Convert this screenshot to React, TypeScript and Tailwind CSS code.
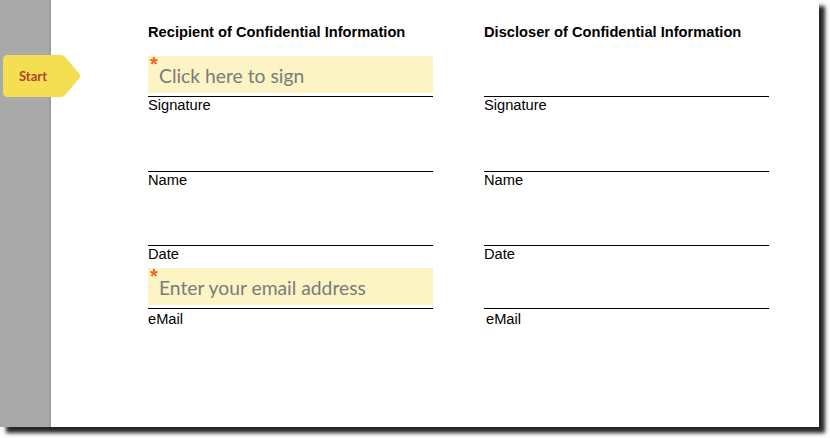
import React from 'react';

interface FieldProps {
  label: string;
  height: string;
  placeholder?: string;
  labelClass?: string;
}

const arial = { fontFamily: '"Liberation Sans", Arial, sans-serif' };
const myriad = { fontFamily: 'Lato, "Noto Sans", sans-serif' };

function Field({ label, height, placeholder, labelClass = '' }: FieldProps) {
  return (
    <div>
      <div className={`flex flex-col justify-end border-b border-black ${height}`}>
        {placeholder && (
          <div className="relative mb-[3px] h-[37px] bg-[#fcf4c4] pl-[11px] text-[19.3px] leading-[39px] text-[#7b7b7b]" style={myriad}>
            <span className="absolute left-[2px] top-[-2px] text-[20px] font-bold leading-none text-[#f26522]" style={arial}>
              *
            </span>
            {placeholder}
          </div>
        )}
      </div>
      <div className={`text-[14.67px] leading-4 text-black ${labelClass}`} style={arial}>
        {label}
      </div>
    </div>
  );
}

function SignerColumn({ title, editable }: { title: string; editable: boolean }) {
  return (
    <div className="flex w-[285px] flex-col">
      <h3 className="text-[14.67px] font-bold leading-4 text-black" style={arial}>
        {title}
      </h3>
      <Field label="Signature" height="h-[57px]" placeholder={editable ? 'Click here to sign' : undefined} />
      <Field label="Name" height="h-[59px]" />
      <Field label="Date" height="h-[58px]" />
      <Field
        label="eMail"
        height="h-[47px]"
        placeholder={editable ? 'Enter your email address' : undefined}
        labelClass={editable ? 'mt-[2px]' : 'mt-[2px] pl-[2px]'}
      />
    </div>
  );
}

function StartTag() {
  return (
    <div className="absolute left-[3px] top-[55px] h-[42px] w-[80px]">
      <svg width="80" height="42" viewBox="0 0 80 42" className="absolute inset-0">
        <path
          d="M5 0 H58 Q60.5 0 62 1.8 L76.5 19 Q78 21 76.5 23 L62 40.2 Q60.5 42 58 42 H5 Q0 42 0 37 V5 Q0 0 5 0 Z"
          fill="#f4df52"
        />
      </svg>
      <span
        className="absolute left-[16px] top-0 text-[13px] font-bold leading-[42px] text-[#b5432a]"
        style={myriad}
      >
        Start
      </span>
    </div>
  );
}

export default function App() {
  return (
    <div className="h-[438px] w-[830px] bg-white">
      <div className="relative flex h-[427px] w-[819px] bg-white shadow-[6px_6px_4px_rgba(0,0,0,0.85)]">
        <div className="h-full w-[51px] border-r-2 border-[#9c9c9c] bg-[#a9a9a9]" />
        <div className="flex gap-[51px] pl-[97px] pt-[24px]">
          <SignerColumn title="Recipient of Confidential Information" editable />
          <SignerColumn title="Discloser of Confidential Information" editable={false} />
        </div>
        <StartTag />
      </div>
    </div>
  );
}
